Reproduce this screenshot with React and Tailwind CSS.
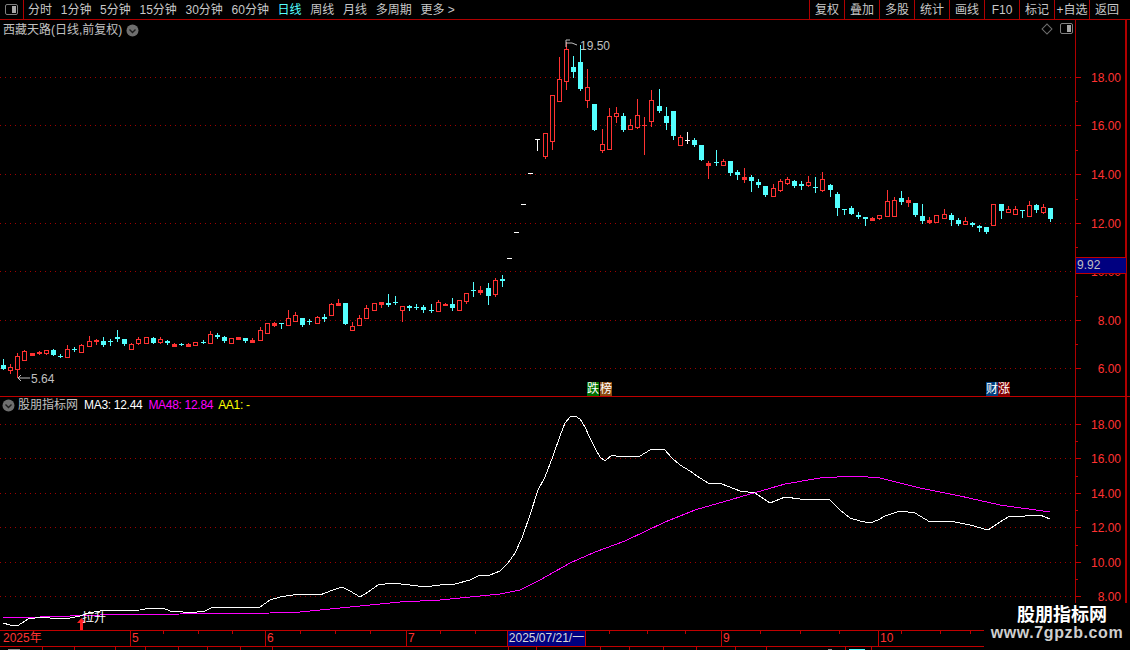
import React from 'react';

const FONT = '"Liberation Sans", "Noto Sans CJK SC", sans-serif';
const RED_TEXT = '#ff3232';
const CYAN = '#54ffff';

// type, high, body top, body bottom, low (page pixels)
const CANDLES = [
  ['c',359,365,369,369],['r',364,367,370,373],['r',353,356,369,377],['r',350,351,360,360],['r',353,353,355,355],
  ['r',351,352,353,354],['r',350,350,353,354],['c',349,350,355,355],['c',354,356,357,357],['r',345,349,357,357],
  ['c',347,349,350,351],['r',344,345,352,352],['r',336,341,346,346],['r',339,340,341,344],['c',337,341,345,346],
  ['c',339,341,342,345],['c',330,337,339,341],['c',339,339,344,345],['r',343,344,349,349],['r',337,339,343,344],
  ['r',337,337,343,343],['c',337,338,343,343],['r',337,339,342,343],['c',340,341,343,344],['r',343,344,346,346],
  ['c',343,344,345,345],['r',343,344,346,346],['r',342,342,345,345],['c',340,342,343,343],['r',331,334,343,343],
  ['c',333,335,337,338],['c',336,337,341,342],['r',338,338,343,343],['r',337,337,339,339],['c',338,338,341,342],
  ['r',338,340,342,342],['r',327,330,340,340],['r',323,323,333,333],['r',322,323,325,326],['c',323,323,324,328],
  ['r',310,318,325,325],['r',312,315,321,321],['c',318,318,325,326],['c',319,321,322,324],['r',316,317,323,323],
  ['c',314,317,319,321],['r',303,304,315,315],['r',299,303,305,305],['c',303,303,324,324],['r',322,326,330,330],
  ['r',315,318,325,325],['r',305,308,318,318],['r',303,303,310,310],['r',302,302,304,307],['c',294,303,305,306],
  ['c',296,302,303,304],['r',306,306,310,321],['c',305,306,308,310],['c',304,307,308,309],['c',305,307,310,312],
  ['c',304,310,311,312],['r',300,302,311,311],['r',303,304,305,305],['c',298,304,308,310],['r',300,300,310,310],
  ['r',293,293,301,303],['c',282,290,291,296],['r',286,290,292,294],['c',283,288,296,304],['r',278,280,294,296],
  ['c',275,279,281,286],['w',258,258,258,258],['w',232,232,232,232],['w',204,204,204,204],['w',173,173,173,173],
  ['w',139,139,139,150],['r',133,133,156,158],['r',95,95,141,149],['r',57,79,101,101],['r',42,49,81,89],
  ['c',56,67,72,77],['c',45,62,89,90],['r',69,87,100,107],['c',104,104,130,130],['r',129,144,150,152],
  ['r',108,116,149,149],['r',107,113,116,122],['c',113,116,130,131],['r',119,125,129,129],['r',99,115,127,128],
  ['r',117,125,125,154],['r',90,100,121,126],['c',89,106,111,112],['c',107,116,123,129],['c',111,111,136,139],
  ['r',135,137,145,145],['w',132,140,140,143],['c',138,140,145,146],['c',145,145,160,160],['r',161,163,165,178],
  ['c',150,162,163,165],['r',159,161,165,165],['c',161,161,173,175],['c',170,172,175,179],['r',168,177,179,182],
  ['c',175,177,181,191],['c',179,182,185,187],['c',186,186,195,196],['r',184,188,196,196],['r',179,181,190,191],
  ['r',177,179,183,184],['c',180,181,186,187],['c',181,184,186,189],['r',176,182,185,186],['c',177,187,188,192],
  ['r',172,179,190,191],['c',184,185,190,196],['c',192,194,208,215],['c',209,209,210,214],['c',206,208,214,214],
  ['c',212,215,217,218],['c',217,217,219,225],['r',217,218,220,220],['r',215,215,218,219],['r',190,201,216,216],
  ['r',197,200,216,216],['c',191,198,202,204],['r',197,200,202,206],['c',203,203,215,216],['c',204,216,221,223],
  ['r',217,220,222,223],['r',215,215,222,222],['r',209,214,218,218],['c',213,215,220,225],['c',218,220,224,225],
  ['r',217,221,224,224],['c',222,223,225,226],['c',225,226,228,231],['c',227,227,232,233],['r',204,204,225,225],
  ['c',204,204,211,218],['r',206,209,212,212],['r',206,209,214,214],['c',210,210,211,217],['r',201,205,216,216],
  ['c',204,205,210,212],['r',204,207,212,213],['c',208,208,219,221],
];

const MA3 = '3,623 10,625 17,626 22,623 28,619 35,618 43,617 50,618 70,618 80,616 88,613 100,611 140,610 150,608 163,608 170,611 183,612 190,613 205,611 213,607 227,607 253,608 260,607 270,600 280,597 293,595 300,594 320,595 333,590 342,587 350,591 360,597 368,592 378,585 392,583 410,585 425,587 440,585 455,584 470,580 480,575 490,575 500,571 508,563 515,553 522,538 530,515 538,490 545,477 553,456 560,436 565,423 570,417 575,416 580,419 585,427 590,438 596,450 600,457 605,461 612,455 620,457 632,456 640,456 650,450 664,449 672,458 680,465 690,471 697,476 708,483 722,484 740,491 755,493 770,503 785,497 800,499 815,499 830,500 840,510 850,518 860,521 870,523 878,520 885,516 900,511 915,513 930,522 950,521 970,525 988,530 1000,522 1010,516 1025,516 1040,515 1050,519';
const MA48 = '3,618 40,617 100,615 180,614 270,613 300,612 350,607 400,602 440,600 500,594 520,590 540,580 570,563 595,552 625,541 665,522 695,510 740,497 785,484 820,478 855,476 880,478 920,488 960,496 1000,505 1050,512';

const UPPER_TICKS = [[77,'18.00'],[125,'16.00'],[174,'14.00'],[223,'12.00'],[271,'10.00'],[320,'8.00'],[368,'6.00']];
const LOWER_TICKS = [[424,'18.00'],[458,'16.00'],[493,'14.00'],[527,'12.00'],[562,'10.00'],[596,'8.00']];

const LEFT_TABS = ['分时', '1分钟', '5分钟', '15分钟', '30分钟', '60分钟'];
const RIGHT_TABS = ['复权', '叠加', '多股', '统计', '画线', 'F10', '标记', '+自选', '返回'];

function SidebarIcon() {
  return (
    <span className="flex h-[11px] w-[13px] justify-end rounded-[2px] border border-[#808080] p-px">
      <span className="w-[4px] bg-[#a8a8a8]" />
    </span>
  );
}

function ChevronDot() {
  return (
    <svg width="13" height="13" viewBox="0 0 13 13">
      <circle cx="6.5" cy="6.5" r="6" fill="#6e6e6e" />
      <path d="M3.5 5.5 L6.5 8.5 L9.5 5.5" fill="none" stroke="#1c1c1c" strokeWidth="1.4" />
    </svg>
  );
}

function Toolbar() {
  return (
    <div className="flex h-[20px] shrink-0 items-stretch border-b border-[#b00000] text-[12px] leading-[18px] text-[#c8c8c8]">
      <div className="flex w-[24px] items-center justify-center border-r border-[#b00000]">
        <SidebarIcon />
      </div>
      <div className="flex items-center gap-[8.7px] pl-[4px]">
        {LEFT_TABS.map((label) => (
          <span key={label}>{label}</span>
        ))}
        <span className="text-[#54ffff]">日线</span>
        <span>周线</span>
        <span>月线</span>
        <span>多周期</span>
        <span>更多 &gt;</span>
      </div>
      <div className="ml-auto flex items-stretch">
        {RIGHT_TABS.map((t) => (
          <div key={t} className="flex w-[35px] items-center justify-center border-l border-[#b00000] whitespace-nowrap">
            {t}
          </div>
        ))}
        <div className="w-[6px]" />
      </div>
    </div>
  );
}

function Candle({ d, i }) {
  const [type, hi, top, bot, lo] = d;
  const x = Math.round(3 + i * 7.125);
  const color = type === 'r' ? RED_TEXT : type === 'c' ? CYAN : '#ffffff';
  const h = bot - top;
  return (
    <g>
      <line x1={x + 0.5} x2={x + 0.5} y1={hi} y2={lo + 1} stroke={color} />
      {type === 'c' && <rect x={x - 2} y={top} width="5" height={Math.max(h, 1)} fill={CYAN} />}
      {type === 'w' && <rect x={x - 2} y={top} width="5" height="1" fill={color} />}
      {type === 'r' && h < 3 && <rect x={x - 2} y={top} width="5" height={h + 1} fill={color} />}
      {type === 'r' && h >= 3 && (
        <rect x={x - 1.5} y={top + 0.5} width="4" height={h} fill="#000" stroke={color} />
      )}
    </g>
  );
}

function Grid({ ticks }) {
  return ticks.map(([y]) => (
    <line key={y} x1="0" x2="1075" y1={y + 0.5} y2={y + 0.5} stroke="#a00000" strokeDasharray="1 4" />
  ));
}

function PriceAxis({ ticks, top, height }) {
  const minor = ticks.slice(0, -1).map(([y], i) => Math.round((y + ticks[i + 1][0]) / 2));
  return (
    <svg className="block w-[52px] shrink-0 border-r-2 border-[#b00000]" height={height} viewBox={`1075 ${top} 50 ${height}`} shapeRendering="crispEdges">
      <line x1="1075.5" x2="1075.5" y1={top} y2={top + height} stroke="#b00000" strokeWidth="1" />
      {ticks.map(([y, label]) => (
        <g key={y}>
          <line x1="1075" x2="1081" y1={y + 0.5} y2={y + 0.5} stroke="#c00000" />
          <text x="1121" y={y + 5} textAnchor="end" fontSize="12" fill={RED_TEXT} style={{ fontFamily: FONT }} shapeRendering="auto">
            {label}
          </text>
        </g>
      ))}
      {minor.map((y) => (
        <line key={y} x1="1075" x2="1078" y1={y + 0.5} y2={y + 0.5} stroke="#c00000" />
      ))}
    </svg>
  );
}

function UpperPanel() {
  return (
    <div className="relative flex h-[376px] shrink-0">
      <svg className="block w-[1075px] shrink-0" height="376" viewBox="0 20 1075 376">
        <g shapeRendering="crispEdges">
          <Grid ticks={UPPER_TICKS} />
          {CANDLES.map((d, i) => (
            <Candle key={i} d={d} i={i} />
          ))}
        </g>
        <path d="M566 40 L566 47 M566 40 L570 40 M566 43 L572 43 L577 45" fill="none" stroke="#c0c0c0" />
        <text x="580" y="50" fontSize="12" fill="#c0c0c0" style={{ fontFamily: FONT }}>19.50</text>
        <path d="M30 378 L18 378 M21 375 L18 378 L21 381" fill="none" stroke="#c0c0c0" />
        <text x="31" y="383" fontSize="12" fill="#c0c0c0" style={{ fontFamily: FONT }}>5.64</text>
      </svg>
      <PriceAxis ticks={UPPER_TICKS} top={20} height={376} />

      <div className="absolute left-[3px] top-[1px] flex items-center gap-[4px] text-[12px] leading-[18px] text-[#c0c0c0]">
        <span>西藏天路(日线,前复权)</span>
        <ChevronDot />
      </div>
      <div className="absolute left-[1043px] top-[3px] flex items-center gap-[9px]">
        <span className="block h-[8px] w-[8px] rotate-45 border border-[#6e6e6e]" />
        <SidebarIcon />
      </div>
      <div className="absolute left-[1076px] top-[237px] h-[17px] w-[50px] border-y border-[#c00000] bg-[#000080] pl-px text-[12px] leading-[15px] text-[#c0c0c0]">
        9.92
      </div>
      <div className="absolute left-[587px] top-[362px] flex text-[12px] leading-[14px] text-white">
        <span className="bg-[#007000]">跌</span>
        <span className="ml-px bg-[#8a4a10]">榜</span>
      </div>
      <div className="absolute left-[986px] top-[362px] flex text-[12px] leading-[14px] text-white">
        <span className="bg-[#003f7f]">财</span>
        <span className="bg-[#7f0000]">涨</span>
      </div>
    </div>
  );
}

function LowerPanel() {
  return (
    <div className="relative flex h-[234px] shrink-0 border-t border-[#c00000]">
      <svg className="block w-[1075px] shrink-0" height="233" viewBox="0 397 1075 233">
        <g shapeRendering="crispEdges">
          <Grid ticks={LOWER_TICKS} />
          <polyline points={MA48} fill="none" stroke="#ff00ff" />
          <polyline points={MA3} fill="none" stroke="#ffffff" />
        </g>
        <polygon points="81.5,618 86,623 83,623 83,630 80,630 80,623 77,623" fill="#ff2020" />
        <text x="82" y="622" fontSize="12" fill="#ffffff" style={{ fontFamily: FONT }}>拉升</text>
      </svg>
      <PriceAxis ticks={LOWER_TICKS} top={397} height={233} />

      <div className="absolute left-[2px] top-0 flex items-center gap-[3px] text-[12px] leading-[16px] tracking-[-0.3px] whitespace-nowrap">
        <ChevronDot />
        <span className="tracking-normal text-[#c0c0c0]">股朋指标网</span>
        <span className="ml-[3px] text-[#ffffff]">MA3: 12.44</span>
        <span className="ml-[3px] text-[#ff00ff]">MA48: 12.84</span>
        <span className="ml-[2px] text-[#ffff00]">AA1: -</span>
      </div>
    </div>
  );
}

function TimeAxis() {
  const ticks = [163, 198, 232, 300, 335, 370, 440, 475, 609, 647, 685, 760, 800, 839, 901, 940, 970];
  return (
    <div className="relative h-[17px] shrink-0 border-y border-[#c00000] text-[12px] leading-[15px] text-[#ff3232]">
      <span className="absolute left-[3px]">2025年</span>
      {[[130, '5'], [265, '6'], [406, '7'], [721, '9'], [878, '10']].map(([x, label]) => (
        <span key={label} className="absolute top-0 h-full border-l border-[#c00000] pl-px" style={{ left: x }}>
          {label}
        </span>
      ))}
      <span className="absolute left-[507px] top-0 h-full w-[79px] border-x border-[#c00000] bg-[#000080] text-center text-[#d8d8d8]">
        2025/07/21/一
      </span>
      {ticks.map((x) => (
        <span key={x} className="absolute top-0 h-[3px] w-px bg-[#c00000]" style={{ left: x }} />
      ))}
    </div>
  );
}

function BottomTabs() {
  const stubs = [42, 74, 115, 145, 178, 207, 240, 272, 508, 536, 600, 629, 663, 696, 735, 766, 845, 871];
  return (
    <div className="relative h-[3px] shrink-0">
      {stubs.map((x) => (
        <span key={x} className="absolute top-0 h-full w-px bg-[#c00000]" style={{ left: x }} />
      ))}
      <span className="absolute left-[8px] top-[2px] h-px w-[12px] bg-[#909090]" />
      <span className="absolute left-[828px] top-[2px] h-px w-[4px] bg-[#909090]" />
      <span className="absolute left-[849px] top-[2px] h-px w-[16px] bg-[#54ffff]" />
    </div>
  );
}

function Watermark() {
  return (
    <div className="absolute bottom-0 right-0 flex h-[47px] w-[146px] flex-col items-center bg-black">
      <span className="ml-[10px] mt-[2px] text-[18px] leading-[20px] font-bold text-white">股朋指标网</span>
      <span className="text-[16px] leading-[16px] font-bold tracking-[0.6px] text-[#cfcfcf]">www.7gpzb.com</span>
    </div>
  );
}

export default function App() {
  return (
    <div className="relative flex h-[650px] w-[1130px] flex-col overflow-hidden bg-black" style={{ fontFamily: FONT }}>
      <Toolbar />
      <UpperPanel />
      <LowerPanel />
      <TimeAxis />
      <BottomTabs />
      <Watermark />
    </div>
  );
}
